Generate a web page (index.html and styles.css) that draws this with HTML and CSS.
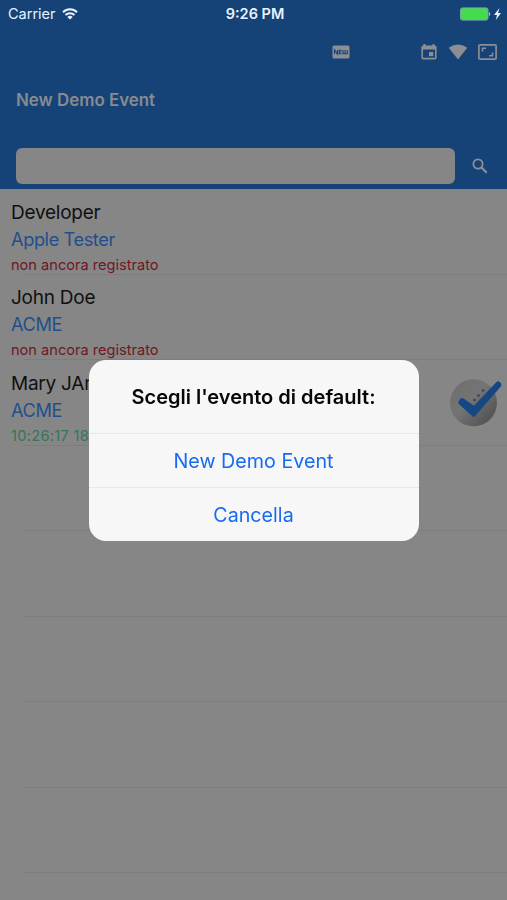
FILE: index.html
```html
<!DOCTYPE html>
<html lang="it">
<head>
    <meta charset="UTF-8">
    <meta name="viewport" content="width=device-width, initial-scale=1.0">
    <title>New Demo Event</title>
    <link rel="stylesheet" href="styles.css">
</head>
<body>

    <header>
        <div class="status-bar">
            <div class="carrier">
                <span>Carrier</span>
                <svg width="16" height="12" viewBox="0 0 16 12" fill="none" stroke="#e6f3ff" stroke-width="2">
                    <path d="M1 4.2a10 10 0 0 1 14 0M3.5 7a6.5 6.5 0 0 1 9 0"/>
                    <path d="M5.3 8.9a4 4 0 0 1 5.4 0L8 11.6z" fill="#e6f3ff" stroke="none"/>
                </svg>
            </div>
            <span class="time">9:26 PM</span>
            <div class="battery">
                <svg width="42" height="14" viewBox="0 0 42 14">
                    <rect x=".5" y=".9" width="27.5" height="12.2" rx="2" fill="#43dc4c" stroke="#78a5a8"/>
                    <path d="M29 5c1.6.3 1.6 3.7 0 4z" fill="#a9cbdc"/>
                    <path d="M39.5 1L34 8h3l-1.2 5L41 6h-3z" fill="#e6f3ff"/>
                </svg>
            </div>
        </div>

        <div class="toolbar">
            <svg class="icon-new" width="18" height="14" viewBox="0 0 18 14">
                <rect x=".5" y=".5" width="17" height="13" rx="1.5" fill="#8b8e92"/>
                <path d="M2.5 9V5l3 4V5M9.6 5.2H7.2v3.6h2.4M7.2 7h2.2M11 5v3.8h4.3V5M13.1 5v3.5" fill="none" stroke="#154378" stroke-width="1.1"/>
            </svg>
            <svg width="16" height="18" viewBox="0 0 16 18">
                <path d="M2.5 1h2v1.5h7V1h2v1.5h.5a1.6 1.6 0 0 1 1.6 1.6v10.7a1.6 1.6 0 0 1-1.6 1.6H2a1.6 1.6 0 0 1-1.6-1.6V4.1A1.6 1.6 0 0 1 2 2.5h.5zM2 6.5v8.3h12V6.5z" fill="#8b8e92" fill-rule="evenodd"/>
                <rect x="8" y="9" width="4.3" height="4.2" fill="#8b8e92"/>
            </svg>
            <svg width="20" height="16" viewBox="0 0 20 16">
                <path d="M.7 3.8Q10-2.8 19.3 3.8L10 15.5z" fill="#8b8e92"/>
            </svg>
            <svg width="19" height="16" viewBox="0 0 19 16" fill="none" stroke="#8b8e92">
                <rect x=".9" y=".9" width="17.2" height="14.2" rx="1.2" stroke-width="1.7"/>
                <path d="M4.5 7.5V4.3H8M14.5 8.5v3.2H11" stroke-width="1.6"/>
            </svg>
        </div>

        <h1>New Demo Event</h1>

        <div class="search">
            <input type="text" aria-label="Cerca">
            <svg width="16" height="16" viewBox="0 0 16 16" fill="none" stroke="#8b9096">
                <circle cx="6" cy="6" r="4.6" stroke-width="1.8"/>
                <path d="M9.3 9.3l5.4 5.4" stroke-width="2.2"/>
            </svg>
        </div>
    </header>

    <ul class="guests">
        <li>
            <p class="name">Developer</p>
            <p class="company">Apple Tester</p>
            <p class="state">non ancora registrato</p>
        </li>
        <li>
            <p class="name">John Doe</p>
            <p class="company">ACME</p>
            <p class="state">non ancora registrato</p>
        </li>
        <li>
            <p class="name">Mary JAne</p>
            <p class="company">ACME</p>
            <p class="state checked">10:26:17 18</p>
            <svg class="check" width="54" height="50" viewBox="0 0 54 50">
                <defs>
                    <linearGradient id="disc" x1="0" y1="0" x2="1" y2="1">
                        <stop offset="0" stop-color="#6e6e6e"/>
                        <stop offset=".45" stop-color="#747474"/>
                        <stop offset="1" stop-color="#484848"/>
                    </linearGradient>
                </defs>
                <circle cx="24.5" cy="24.8" r="23.5" fill="url(#disc)"/>
                <path d="M11.5 20.500q1.500-1 3 0L25 27.700 47.500 4q1.700-1.500 3.300 0l1.200 1.500q1 1.500-.2 3L26 38.300q-1.300 1.300-2.600 0L9.800 26q-1-1.200-.2-2.500z" fill="#154882"/>
                <path d="M25.500 22h.01M29.500 17.500h.01M34 12.500h.01" stroke="#2b4669" stroke-width="2.600" stroke-linecap="round"/>
            </svg>
        </li>
        <li></li>
        <li></li>
        <li></li>
        <li></li>
        <li></li>
    </ul>

    <div class="overlay">
        <div class="alert" role="alertdialog">
            <h2>Scegli l'evento di default:</h2>
            <button>New Demo Event</button>
            <button>Cancella</button>
        </div>
    </div>

</body>
</html>
```
FILE: styles.css
```css
* {
    box-sizing: border-box;
}

body {
    font-family: Inter, "Liberation Sans", sans-serif;
    background-color: #868686;
    margin: 0;
    height: 900px;
    overflow: hidden;
}

h1, h2, p, ul {
    margin: 0;
    padding: 0;
}

svg {
    display: block;
}

/* --- Header --- */
header {
    height: 189px;
    background-color: #154378;
}

.status-bar {
    display: grid;
    grid-template-columns: 1fr auto 1fr;
    align-items: center;
    height: 27px;
    padding: 0 5px 0 8px;
    color: #e6f3ff;
    font-size: 14.5px;
}

.carrier {
    display: flex;
    align-items: center;
    gap: 6px;
}

.time {
    font-weight: 600;
}

.battery {
    justify-self: end;
}

.toolbar {
    display: flex;
    align-items: center;
    justify-content: flex-end;
    height: 50px;
    gap: 10.5px;
    padding-right: 10px;
}

.icon-new {
    margin-right: 61px;
}

h1 {
    height: 71px;
    padding: 11px 0 0 16px;
    font-size: 16.9px;
    font-weight: 600;
    line-height: 24px;
    color: #888b8f;
}

.search {
    display: flex;
    align-items: center;
    gap: 17px;
    padding-left: 16px;
}

.search input {
    width: 439px;
    height: 36px;
    padding: 0 10px;
    border: none;
    border-radius: 6px;
    background-color: #868686;
}

/* --- Guest list --- */
.guests {
    list-style: none;
}

.guests li {
    position: relative;
    height: 85.5px;
    padding: 9.5px 0 0 11px;
    background: linear-gradient(#7d7d7d, #7d7d7d) 24px 100% / 100% 1px no-repeat;
}

.name {
    font-size: 19px;
    line-height: 27px;
    letter-spacing: -0.25px;
    color: #101010;
}

.company {
    font-size: 18.2px;
    line-height: 27px;
    letter-spacing: -0.4px;
    color: #1f4f8c;
}

.state {
    font-size: 14.6px;
    line-height: 24px;
    color: #701624;
}

.checked {
    letter-spacing: 0.3px;
    color: #37745a;
}

.check {
    position: absolute;
    top: 18px;
    right: 4px;
}

/* --- Alert --- */
.overlay {
    position: fixed;
    inset: 0;
    display: flex;
    align-items: center;
    justify-content: center;
}

.alert {
    width: 330px;
    height: 181px;
    margin-top: 1px;
    border-radius: 17px;
    background-color: #f7f7f7;
    overflow: hidden;
}

.alert h2 {
    height: 72.5px;
    font-size: 20px;
    font-weight: 600;
    line-height: 74px;
    text-align: center;
    color: #060606;
}

.alert button {
    display: block;
    width: 100%;
    height: 54.25px;
    padding: 2px 0 0;
    border: none;
    border-top: 1px solid #e4e8e7;
    background: none;
    font-family: inherit;
    font-size: 19.7px;
    color: #176bf2;
}
```
